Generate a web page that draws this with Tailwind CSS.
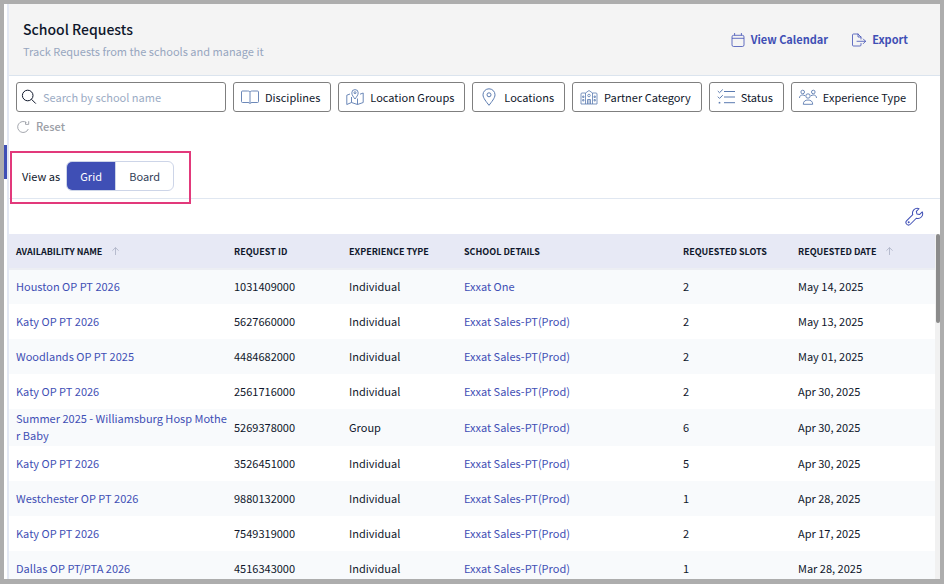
<!DOCTYPE html>
<html lang="en">
  <head>
    <meta charset="UTF-8" />
    <meta name="viewport" content="width=device-width, initial-scale=1.0" />
    <title>School Requests</title>
    <script src="https://cdn.jsdelivr.net/npm/@tailwindcss/browser@4"></script>
    <style>
      body {
        font-family: "Noto Sans CJK SC", "Open Sans", sans-serif;
      }
    </style>
  </head>
  <body class="h-screen overflow-hidden border-4 border-b-[5px] border-[#adadad] bg-white flex text-[11px] leading-[17px] text-slate-900">
    <!-- Collapsed sidebar -->
    <aside class="w-[5px] shrink-0 border-r-2 border-[#e3e8f3] pt-[141px]">
      <div class="h-[34px] bg-[#3f4fb5]"></div>
    </aside>

    <main class="relative flex min-w-0 flex-1 flex-col">
      <header class="flex h-[72px] shrink-0 items-center justify-between border-b border-[#dbe4ee] bg-[#f4f4f4] pl-3.5 pr-8">
        <div>
          <h1 class="text-[14px] leading-[22px] font-medium">School Requests</h1>
          <p class="leading-[22px] text-[#97a6bf]">Track Requests from the schools and manage it</p>
        </div>
        <div class="flex items-center gap-6 font-bold text-[#3f4fb5]">
          <button type="button" class="flex items-center gap-1.5">
            <svg class="size-3.5" viewBox="0 0 14 14" fill="none" stroke="currentColor" stroke-width="0.8">
              <rect x="1" y="2.3" width="12" height="11.2" rx="1.6" />
              <path d="M1 5.3h12M3.6 0v2.3M10.4 0v2.3" />
            </svg>
            View Calendar
          </button>
          <button type="button" class="flex items-center gap-1.5">
            <svg class="size-3.5" viewBox="0 0 14 14" fill="none" stroke="currentColor" stroke-width="0.8" stroke-linejoin="round" stroke-linecap="round">
              <path d="M9 6V4L6 1H1.5a1 1 0 0 0-1 1v10a1 1 0 0 0 1 1H8a1 1 0 0 0 1-1v-1.5M6 1v3h3M5 8.3h8.5M11.3 6l2.3 2.3-2.3 2.3" />
            </svg>
            Export
          </button>
        </div>
      </header>

      <section class="shrink-0 border-b border-[#e0e7f1] px-[7px] pt-1.5 pb-[7px]">
        <div class="flex flex-wrap gap-[7px]">
          <label class="flex h-[30px] w-[210px] items-center gap-1.5 rounded-[3px] border border-[#7f7f7f] px-1">
            <svg class="size-4 shrink-0" viewBox="0 0 16 16" fill="none" stroke="currentColor" stroke-width="1">
              <circle cx="6.7" cy="6.5" r="5.3" />
              <path d="M10.5 10.3l4.3 4.3" />
            </svg>
            <input type="text" aria-label="Search by school name" placeholder="Search by school name" class="min-w-0 flex-1 outline-none placeholder:text-[#9babc4]" />
          </label>
          <button type="button" class="flex h-[30px] items-center gap-1.5 rounded-[3px] border border-[#7f7f7f] pl-[7px] pr-2.5">
            <svg class="size-[18px] text-[#5b7bb0]" viewBox="0 0 18 18" fill="none" stroke="currentColor" stroke-width="0.9" stroke-linejoin="round">
              <path d="M9 4C8.5 3 7.5 3 6.5 3h-5a1 1 0 0 0-1 1v9.5a1 1 0 0 0 1 1H7c1 0 1.7.3 2 1 .3-.7 1-1 2-1h5.5a1 1 0 0 0 1-1V4a1 1 0 0 0-1-1h-5c-1 0-2 0-2.500 1v11.5" />
            </svg>
            Disciplines
          </button>
          <button type="button" class="flex h-[30px] items-center gap-1.5 rounded-[3px] border border-[#7f7f7f] pl-[7px] pr-2.5">
            <svg class="size-[18px] text-[#5b7bb0]" viewBox="0 0 18 18" fill="none" stroke="currentColor" stroke-width="0.9" stroke-linejoin="round">
              <path d="M9 11C7.5 9 5.8 7 5.8 4.8a3.2 3.2 0 0 1 6.4 0C12.2 7 10.5 9 9 11z" />
              <circle cx="9" cy="4.7" r="1" />
              <path d="M4 6L.8 7.2v9.3l4.7-2 6 2 5.7-2V5L14 6.2M5.5 9v5.5M11.5 10.5v6" />
            </svg>
            Location Groups
          </button>
          <button type="button" class="flex h-[30px] items-center gap-1.5 rounded-[3px] border border-[#7f7f7f] pl-[7px] pr-2.5">
            <svg class="size-[18px] text-[#5b7bb0]" viewBox="0 0 18 18" fill="none" stroke="currentColor" stroke-width="1" stroke-linejoin="round">
              <path d="M9 17.3C6.5 14 3 10 3 6.8a6 6 0 0 1 12 0C15 10 11.5 14 9 17.3z" />
              <circle cx="9" cy="6.8" r="2" />
            </svg>
            Locations
          </button>
          <button type="button" class="flex h-[30px] items-center gap-1.5 rounded-[3px] border border-[#7f7f7f] pl-[7px] pr-2.5">
            <svg class="size-[18px] text-[#5b7bb0]" viewBox="0 0 18 18" fill="none" stroke="currentColor" stroke-width="0.8" stroke-linejoin="round">
              <path d="M5.5 16V5L9 2.5 12.5 5v11M5.5 5H2a1 1 0 0 0-1 1v10h16V6a1 1 0 0 0-1-1h-3.5M7.5 16v-4.5h3V16M9 11.5V16" />
              <circle cx="9" cy="7.5" r="1.3" />
              <path d="M2.7 8h1.2v1.5H2.7zM2.7 11.5h1.2V13H2.7zM14.1 8h1.2v1.5h-1.2zM14.1 11.5h1.2V13h-1.2z" />
            </svg>
            Partner Category
          </button>
          <button type="button" class="flex h-[30px] items-center gap-1.5 rounded-[3px] border border-[#7f7f7f] pl-[7px] pr-2.5">
            <svg class="size-[18px] text-[#5b7bb0]" viewBox="0 0 18 18" fill="none" stroke="currentColor" stroke-width="1">
              <path d="M7 3.5h11M7 9h11M7 14.7h11M.8 3l1.7 1.7L5.8 1.5M.8 8.7l1.7 1.7 3.3-3.2" />
              <path d="M1.7 14.7h1.6" stroke-width="1.6" />
            </svg>
            Status
          </button>
          <button type="button" class="flex h-[30px] items-center gap-1.5 rounded-[3px] border border-[#7f7f7f] pl-[7px] pr-2.5">
            <svg class="size-[18px] text-[#5b7bb0]" viewBox="0 0 18 18" fill="none" stroke="currentColor" stroke-width="0.9">
              <circle cx="3.7" cy="4" r="1.8" />
              <circle cx="14.3" cy="4" r="1.8" />
              <circle cx="9" cy="8" r="2.2" />
              <path d="M4.3 16.3c0-3 2-4.3 4.7-4.3s4.7 1.3 4.7 4.3zM.5 10c0-2 1.3-3 3.2-3 .9 0 1.7.3 2.3.8M17.5 10c0-2-1.3-3-3.2-3-.9 0-1.7.3-2.3.8" />
            </svg>
            Experience Type
          </button>
        </div>

        <button type="button" class="mt-1.5 flex items-center gap-1.5 font-medium text-[#9b9ea6]">
          <svg class="size-3.5" viewBox="0 0 14 14" fill="none" stroke="currentColor" stroke-width="0.9">
            <path d="M10.5 2.6A5.5 5.5 0 1 0 12.3 9" />
            <path d="M12.7 1.2v3.2H9.5V1.8" />
          </svg>
          Reset
        </button>

        <div class="mt-[26px] flex items-center gap-1.5 pl-1.5">
          <span>View as</span>
          <div class="flex h-[30px] overflow-hidden rounded-[6px] border border-[#cdd5e8]">
            <button type="button" class="w-12 bg-[#3f4fb5] text-white">Grid</button>
            <button type="button" class="w-[58px] border-l border-[#cdd5e8] text-slate-700">Board</button>
          </div>
        </div>
      </section>

      <div class="flex h-[35px] shrink-0 items-center justify-end pr-4">
        <button type="button" aria-label="Table settings" class="text-[#3f4fb5]">
          <svg class="size-[19px]" viewBox="0 0 24 24" fill="none" stroke="currentColor" stroke-width="1.3" stroke-linejoin="round">
            <path d="M21.8 6.2l-3.5 3.4-3.2-.8-.8-3.2 3.4-3.4A6 6 0 0 0 9.8 9.7L2.2 17.3a3.1 3.1 0 0 0 4.5 4.5l7.6-7.6a6 6 0 0 0 7.5-8z" />
            <circle cx="4.7" cy="19.3" r="0.6" />
          </svg>
        </button>
      </div>

      <div class="flex min-h-0 flex-1">
        <div class="min-w-0 flex-1 overflow-hidden">
          <table class="w-full table-fixed text-left">
            <colgroup>
              <col class="w-[218px]" />
              <col class="w-[115px]" />
              <col class="w-[115px]" />
              <col class="w-[219px]" />
              <col class="w-[115px]" />
              <col />
            </colgroup>
            <thead class="border-b-2 border-[#eceef3] bg-[#e7e9f5] text-[9px] uppercase">
              <tr class="h-[35px]">
                <th class="px-[7px] font-bold">
                  <span class="flex items-center gap-2.5">Availability Name
                    <svg class="h-2 w-[7px] text-[#a9afc4]" viewBox="0 0 7 8" fill="none" stroke="currentColor" stroke-width="0.8"><path d="M3.5 8V.6M.4 3.7L3.5.6l3.1 3.1" /></svg>
                  </span>
                </th>
                <th class="px-[7px] font-bold">Request ID</th>
                <th class="px-[7px] font-bold">Experience Type</th>
                <th class="px-[7px] font-bold">School Details</th>
                <th class="px-[7px] font-bold">Requested Slots</th>
                <th class="px-[7px] font-bold">
                  <span class="flex items-center gap-2.5">Requested Date
                    <svg class="h-2 w-[7px] text-[#a9afc4]" viewBox="0 0 7 8" fill="none" stroke="currentColor" stroke-width="0.8"><path d="M3.5 8V.6M.4 3.7L3.5.6l3.1 3.1" /></svg>
                  </span>
                </th>
              </tr>
            </thead>
            <tbody id="requests"></tbody>
          </table>
        </div>
        <div class="w-[5px] shrink-0 bg-[#f1f1f1] pl-px">
          <div class="h-[89px] rounded-sm bg-[#8b8b8b]"></div>
        </div>
      </div>

      <!-- Highlight around the view switch -->
      <div class="pointer-events-none absolute top-[147px] left-px h-[53px] w-[181px] border-2 border-[#e2397b]"></div>
    </main>

    <script>
      const requests = [
        ["Houston OP PT 2026", "1031409000", "Individual", "Exxat One", 2, "May 14, 2025"],
        ["Katy OP PT 2026", "5627660000", "Individual", "Exxat Sales-PT(Prod)", 2, "May 13, 2025"],
        ["Woodlands OP PT 2025", "4484682000", "Individual", "Exxat Sales-PT(Prod)", 2, "May 01, 2025"],
        ["Katy OP PT 2026", "2561716000", "Individual", "Exxat Sales-PT(Prod)", 2, "Apr 30, 2025"],
        ["Summer 2025 - Williamsburg Hosp Mother Baby", "5269378000", "Group", "Exxat Sales-PT(Prod)", 6, "Apr 30, 2025"],
        ["Katy OP PT 2026", "3526451000", "Individual", "Exxat Sales-PT(Prod)", 5, "Apr 30, 2025"],
        ["Westchester OP PT 2026", "9880132000", "Individual", "Exxat Sales-PT(Prod)", 1, "Apr 28, 2025"],
        ["Katy OP PT 2026", "7549319000", "Individual", "Exxat Sales-PT(Prod)", 2, "Apr 17, 2025"],
        ["Dallas OP PT/PTA 2026", "4516343000", "Individual", "Exxat Sales-PT(Prod)", 1, "Mar 28, 2025"],
      ];

      document.getElementById("requests").innerHTML = requests
        .map(
          ([name, id, type, school, slots, date]) => `
            <tr class="h-[35px] odd:bg-[#f8fafc]">
              <td class="pl-[7px] pt-px pb-0.5 break-all"><a href="#" class="text-[#3f4fb5]">${name}</a></td>
              <td class="px-[7px] pt-px pb-0.5">${id}</td>
              <td class="px-[7px] pt-px pb-0.5">${type}</td>
              <td class="px-[7px] pt-px pb-0.5"><a href="#" class="text-[#3f4fb5]">${school}</a></td>
              <td class="px-[7px] pt-px pb-0.5">${slots}</td>
              <td class="px-[7px] pt-px pb-0.5">${date}</td>
            </tr>`
        )
        .join("");
    </script>
  </body>
</html>
